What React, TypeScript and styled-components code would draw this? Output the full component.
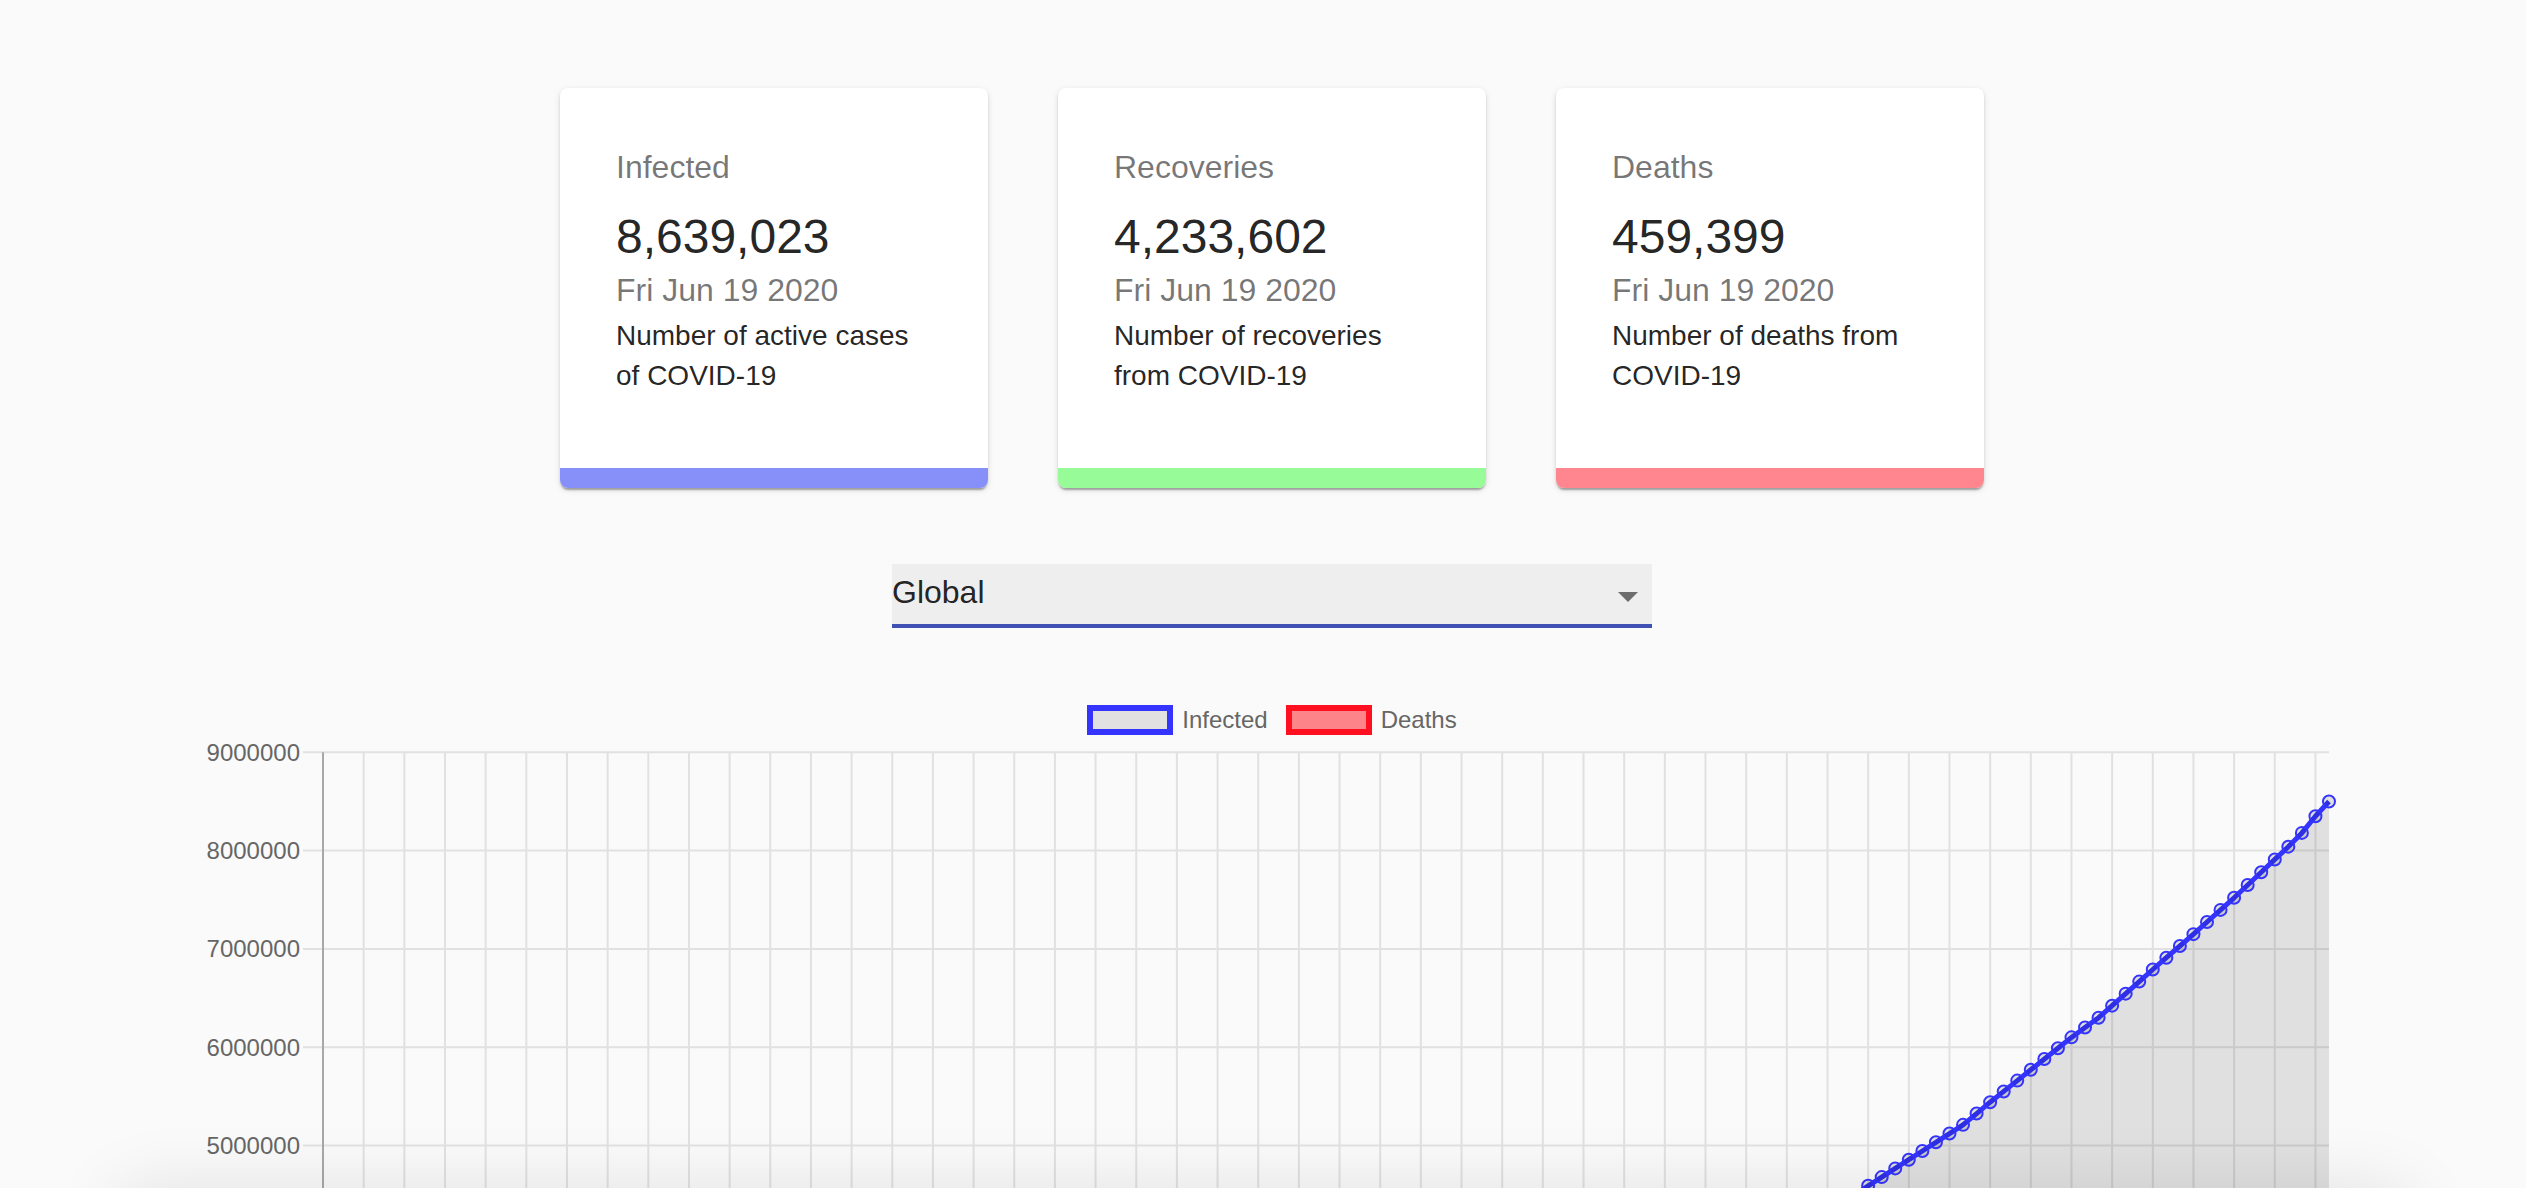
import React from 'react';
import styled, { createGlobalStyle } from 'styled-components';

const GlobalStyle = createGlobalStyle`
  html, body {
    margin: 0;
    padding: 0;
    background: #fafafa;
    overflow: hidden;
  }
  body {
    font-family: "Liberation Sans", Helvetica, Arial, sans-serif;
  }
`;

type Stat = {
  label: string;
  value: string;
  text: string;
  color: string;
};

const stats: Stat[] = [
  { label: 'Infected', value: '8,639,023', text: 'Number of active cases of COVID-19', color: '#8690f8' },
  { label: 'Recoveries', value: '4,233,602', text: 'Number of recoveries from COVID-19', color: '#97fb97' },
  { label: 'Deaths', value: '459,399', text: 'Number of deaths from COVID-19', color: '#ff868e' },
];

// cumulative totals in millions, keyed by day index (Jan 22 = 0)
const infectedAnchors: [number, number][] = [
  [0, 0.000555], [9, 0.0099], [15, 0.0307], [25, 0.0711], [39, 0.0882], [45, 0.1056],
  [53, 0.167], [60, 0.337], [67, 0.72], [70, 0.932], [77, 1.51], [84, 2.05], [91, 2.62],
  [100, 3.35], [107, 3.93], [114, 4.59], [121, 5.21], [123, 5.44], [129, 6.1], [131, 6.3],
  [135, 6.79], [138, 7.15], [141, 7.52], [145, 8.04], [146, 8.18], [147, 8.35], [148, 8.5],
];

const deathAnchors: [number, number][] = [
  [0, 0.000017], [39, 0.003], [53, 0.0065], [60, 0.0147], [70, 0.047], [84, 0.134],
  [100, 0.238], [114, 0.304], [131, 0.37], [148, 0.452],
];

const DAYS = 149;

const series = (anchors: [number, number][]) =>
  Array.from({ length: DAYS }, (_, i) => {
    let k = 0;
    while (k < anchors.length - 2 && anchors[k + 1][0] < i) k++;
    const [a, va] = anchors[k];
    const [b, vb] = anchors[k + 1];
    return va + ((vb - va) * (i - a)) / (b - a);
  });

const X0 = 119;
const STEP = 13.554;
const Y0 = 897;
const PER_M = 98.3;
const RIGHT = 2125;

const px = (i: number) => X0 + i * STEP;
const py = (v: number) => Y0 - v * PER_M;

const Page = styled.div`
  padding: 88px 0 0 18px;
  display: flex;
  flex-direction: column;
  align-items: center;
`;

const CardRow = styled.div`
  display: flex;
  gap: 70px;
`;

const Card = styled.div`
  width: 428px;
  height: 400px;
  background: #fff;
  border-radius: 8px;
  overflow: hidden;
  display: flex;
  flex-direction: column;
  box-shadow: 0px 4px 2px -2px rgba(0, 0, 0, 0.2), 0px 2px 2px 0px rgba(0, 0, 0, 0.14),
    0px 2px 6px 0px rgba(0, 0, 0, 0.12);
`;

const CardBody = styled.div`
  flex: 1;
  padding: 55px 56px 0;
`;

const CardLabel = styled.div`
  font-size: 32px;
  line-height: 48px;
  color: rgba(0, 0, 0, 0.54);
  margin-bottom: 11px;
`;

const CardValue = styled.div`
  font-size: 48px;
  line-height: 64px;
  color: rgba(0, 0, 0, 0.87);
  padding-top: 3px;
  margin-bottom: -3px;
`;

const CardDate = styled.div`
  font-size: 32px;
  line-height: 48px;
  color: rgba(0, 0, 0, 0.54);
`;

const CardText = styled.div`
  font-size: 28px;
  line-height: 39.5px;
  margin-top: 2px;
  color: rgba(0, 0, 0, 0.87);
`;

const CardBar = styled.div<{ $color: string }>`
  height: 20px;
  background: ${(p) => p.$color};
`;

const Select = styled.div`
  margin-top: 76px;
  width: 760px;
  height: 60px;
  background: #eeeeee;
  border-bottom: 4px solid #3f51b5;
  display: flex;
  justify-content: space-between;
  align-items: flex-start;
`;

const SelectValue = styled.div`
  font-size: 32px;
  line-height: 56px;
  color: rgba(0, 0, 0, 0.87);
`;

const DropIcon = styled.svg`
  width: 48px;
  height: 48px;
  margin-top: 8px;
  fill: rgba(0, 0, 0, 0.54);
`;

const Legend = styled.div`
  margin-top: 77px;
  display: flex;
  align-items: center;
  gap: 18px;
`;

const LegendItem = styled.div`
  display: flex;
  align-items: center;
  gap: 9px;
  font-size: 24px;
  line-height: 30px;
  color: #666;
`;

const LegendBox = styled.span<{ $border: string; $fill: string }>`
  width: 86px;
  height: 30px;
  box-sizing: border-box;
  border: 6px solid ${(p) => p.$border};
  background: ${(p) => p.$fill};
`;

const ChartSvg = styled.svg`
  margin-top: 5px;
  display: block;
  font-family: "Liberation Sans", Helvetica, Arial, sans-serif;
`;

const BottomShade = styled.div`
  position: fixed;
  left: 110px;
  right: 110px;
  top: 100%;
  height: 80px;
  border-radius: 40px;
  box-shadow: 0 0 70px rgba(0, 0, 0, 0.1);
  pointer-events: none;
`;

const LineChart: React.FC = () => {
  const infected = series(infectedAnchors);
  const deaths = series(deathAnchors);

  const dataset = (values: number[], stroke: string, fill: string, dot: string) => {
    const pts = values.map((v, i) => `${px(i).toFixed(1)},${py(v).toFixed(1)}`);
    const area = `M${px(0)},${Y0} L${pts.join(' L')} L${px(DAYS - 1)},${Y0} Z`;
    return (
      <g>
        <path d={area} fill={fill} />
        <polyline points={pts.join(' ')} fill="none" stroke={stroke} strokeWidth={5} strokeLinejoin="round" />
        {values.map((v, i) => (
          <circle key={i} cx={px(i)} cy={py(v)} r={6} fill={dot} stroke={stroke} strokeWidth={2} />
        ))}
      </g>
    );
  };

  return (
    <ChartSvg width={2136} height={960} viewBox="0 0 2136 960">
      {Array.from({ length: 10 }, (_, m) => (
        <line key={`h${m}`} x1={99} x2={RIGHT} y1={py(m)} y2={py(m)} stroke="#e1e1e1" strokeWidth={2} />
      ))}
      {Array.from({ length: 49 }, (_, k) => (
        <line
          key={`v${k}`}
          x1={px(3 * (k + 1))}
          x2={px(3 * (k + 1))}
          y1={py(9)}
          y2={Y0 + 20}
          stroke="#e1e1e1"
          strokeWidth={2}
        />
      ))}
      <line x1={X0} x2={X0} y1={py(9)} y2={Y0 + 20} stroke="#a8a8a8" strokeWidth={2} />
      {Array.from({ length: 10 }, (_, m) => (
        <text key={`t${m}`} x={96} y={py(m)} textAnchor="end" dominantBaseline="central" fontSize={24} fill="#666">
          {m * 1000000}
        </text>
      ))}
      {dataset(deaths, '#ff1020', 'rgba(255, 0, 0, 0.5)', 'rgba(255, 0, 0, 0.5)')}
      {dataset(infected, '#3434fe', 'rgba(0, 0, 0, 0.1)', 'rgba(0, 0, 0, 0.1)')}
    </ChartSvg>
  );
};

const App: React.FC = () => {
  return (
    <>
      <GlobalStyle />
      <Page>
        <CardRow>
          {stats.map((s) => (
            <Card key={s.label}>
              <CardBody>
                <CardLabel>{s.label}</CardLabel>
                <CardValue>{s.value}</CardValue>
                <CardDate>Fri Jun 19 2020</CardDate>
                <CardText>{s.text}</CardText>
              </CardBody>
              <CardBar $color={s.color} />
            </Card>
          ))}
        </CardRow>

        <Select>
          <SelectValue>Global</SelectValue>
          <DropIcon viewBox="0 0 24 24">
            <path d="M7 10l5 5 5-5z" />
          </DropIcon>
        </Select>

        <Legend>
          <LegendItem>
            <LegendBox $border="#3434fe" $fill="#e1e1e1" />
            Infected
          </LegendItem>
          <LegendItem>
            <LegendBox $border="#ff1020" $fill="#fd8489" />
            Deaths
          </LegendItem>
        </Legend>

        <LineChart />
      </Page>
      <BottomShade />
    </>
  );
};

export default App;
